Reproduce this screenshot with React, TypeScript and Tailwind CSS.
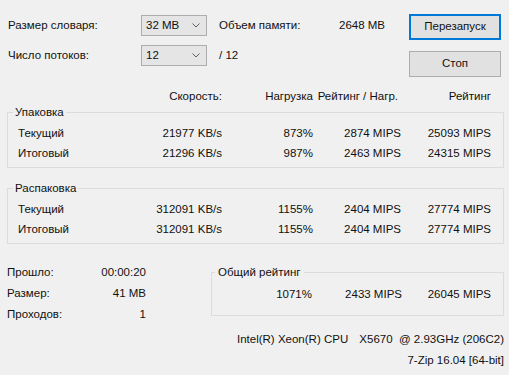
import type React from "react";

const Combo: React.FC<{ value: string }> = ({ value }) => (
    <div className="flex h-[21px] w-[66px] items-center justify-between border border-[#adadad] bg-[#e5e5e5] pl-[4px] pr-[6px]">
        <span>{value}</span>
        <svg width="8" height="5" viewBox="0 0 8 5">
            <path d="M0.5 0.5 L4 4 L7.5 0.5" fill="none" stroke="#606060" />
        </svg>
    </div>
);

const Row: React.FC<{ label: string; cells: string[] }> = ({ label, cells }) => (
    <div className="flex h-[20px] items-center pl-[10px]">
        <div className="flex w-[204px] justify-between">
            <span>{label}</span>
            <span>{cells[0]}</span>
        </div>
        <span className="w-[91px] text-right">{cells[1]}</span>
        <span className="w-[88px] text-right">{cells[2]}</span>
        <span className="w-[90px] text-right">{cells[3]}</span>
    </div>
);

const Group: React.FC<{ title: string; rows: [string, string[]][]; className?: string }> = ({
    title,
    rows,
    className,
}) => (
    <fieldset className={`ml-[7px] mr-[5px] border border-[#dcdcdc] pb-[3px] pt-[4px] ${className ?? ""}`}>
        <legend className="ml-[5px] px-[2px] leading-[16px]">{title}</legend>
        {rows.map(([label, cells]) => (
            <Row key={label} label={label} cells={cells} />
        ))}
    </fieldset>
);

export default function App() {
    return (
        <div className="h-[375px] w-[509px] overflow-hidden bg-[#f0f0f0] font-['Liberation_Sans',Arial,sans-serif] text-[11.5px] text-[#111]">
            <div className="flex pt-[14px]">
                <div className="flex flex-col gap-[9px] pl-[8px] pt-[1px]">
                    <div className="flex h-[21px] items-center">
                        <span className="w-[133px]">Размер словаря:</span>
                        <Combo value="32 MB" />
                        <span className="ml-[12px] w-[120px]">Объем памяти:</span>
                        <span>2648 MB</span>
                    </div>
                    <div className="flex h-[21px] items-center">
                        <span className="w-[133px]">Число потоков:</span>
                        <Combo value="12" />
                        <span className="ml-[12px]">/ 12</span>
                    </div>
                </div>
                <div className="ml-auto mr-[8px] flex flex-col gap-[11px]">
                    <button className="h-[26px] w-[92px] border-2 border-[#0078d7] bg-[#e1e1e1]">
                        Перезапуск
                    </button>
                    <button className="h-[26px] w-[92px] border border-[#adadad] bg-[#e1e1e1]">
                        Стоп
                    </button>
                </div>
            </div>

            <div className="mt-[13px] flex h-[14px] items-center whitespace-nowrap pl-[18px]">
                <span className="flex w-[204px] justify-end">Скорость:</span>
                <span className="flex w-[91px] justify-end">Нагрузка</span>
                <span className="flex w-[88px] justify-end pr-[3px]">
                    <span className="shrink-0">Рейтинг / Нагр.</span>
                </span>
                <span className="flex w-[90px] justify-end">Рейтинг</span>
            </div>

            <Group
                title="Упаковка"
                rows={[
                    ["Текущий", ["21977 KB/s", "873%", "2874 MIPS", "25093 MIPS"]],
                    ["Итоговый", ["21296 KB/s", "987%", "2463 MIPS", "24315 MIPS"]],
                ]}
            />
            <Group
                className="mt-[12px]"
                title="Распаковка"
                rows={[
                    ["Текущий", ["312091 KB/s", "1155%", "2404 MIPS", "27774 MIPS"]],
                    ["Итоговый", ["312091 KB/s", "1155%", "2404 MIPS", "27774 MIPS"]],
                ]}
            />

            <div className="mt-[18px] flex">
                <div className="ml-[7px] w-[139px]">
                    {[
                        ["Прошло:", "00:00:20"],
                        ["Размер:", "41 MB"],
                        ["Проходов:", "1"],
                    ].map(([label, value]) => (
                        <div key={label} className="flex h-[21px] items-center justify-between">
                            <span>{label}</span>
                            <span>{value}</span>
                        </div>
                    ))}
                </div>
                <div className="ml-[65px] flex flex-col">
                    <fieldset className="mt-[2px] w-[293px] border border-[#dcdcdc] pb-[10px] pt-[5px]">
                        <legend className="ml-[3px] px-[3px] leading-[16px]">Общий рейтинг</legend>
                        <div className="flex h-[20px] items-center">
                            <span className="w-[100px] text-right">1071%</span>
                            <span className="w-[90px] text-right">2433 MIPS</span>
                            <span className="w-[89px] text-right">26045 MIPS</span>
                        </div>
                    </fieldset>
                </div>
            </div>

            <div className="ml-[237px] mt-[4px] flex h-[21px] w-[267px] items-center justify-between">
                <span>Intel(R) Xeon(R) CPU</span>
                <span className="whitespace-pre">X5670  @ 2.93GHz (206C2)</span>
            </div>
            <div className="flex h-[21px] items-center justify-end pr-[5px]">
                <span>7-Zip 16.04 [64-bit]</span>
            </div>
        </div>
    );
}
